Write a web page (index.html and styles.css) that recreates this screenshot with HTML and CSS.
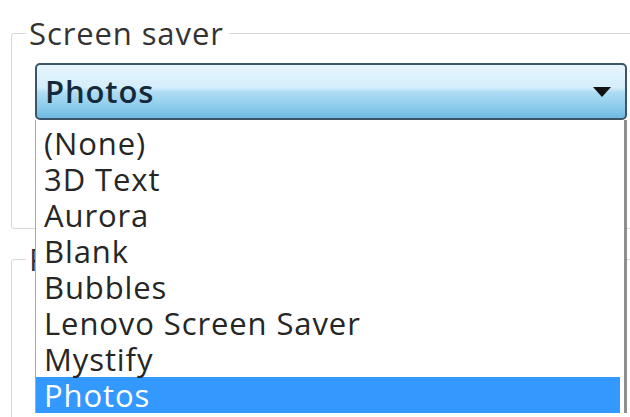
FILE: index.html
```html
<!DOCTYPE html>
<html>
<head>
<meta charset="utf-8">
<link rel="stylesheet" href="styles.css">
</head>
<body>
<div class="page">
  <fieldset class="group group-saver">
    <legend class="group-label">Screen saver</legend>
    <div class="combo">
      <div class="combo-box">
        <span class="combo-value">Photos</span>
        <svg class="combo-arrow" width="18" height="10" viewBox="0 0 18 10"><path d="M0 0 H18 L9 10 Z" fill="#111"/></svg>
      </div>
      <ul class="combo-list">
        <li class="combo-item">(None)</li>
        <li class="combo-item">3D Text</li>
        <li class="combo-item">Aurora</li>
        <li class="combo-item">Blank</li>
        <li class="combo-item">Bubbles</li>
        <li class="combo-item">Lenovo Screen Saver</li>
        <li class="combo-item">Mystify</li>
        <li class="combo-item is-selected">Photos</li>
      </ul>
    </div>
  </fieldset>
  <fieldset class="group group-power">
    <legend class="group-label">Power management</legend>
  </fieldset>
</div>
</body>
</html>
```
FILE: styles.css
```css
html, body {
  margin: 0;
  padding: 0;
  background: #ffffff;
  overflow: hidden;
  width: 630px;
  height: 417px;
}

.page {
  font-family: "Open Sans", "Noto Sans", sans-serif;
  font-size: 31px;
  letter-spacing: 0.9px;
  font-weight: 500;
  color: #2b2b2b;
  padding-top: 16px;
  padding-left: 11px;
  width: 660px;
}

.group {
  margin: 0;
  padding: 0;
  border: 1px solid #d6d9dc;
  border-radius: 3px;
  min-width: 0;
}

.group-label {
  margin-left: 14px;
  padding: 0 5px 0 3px;
  line-height: 34px;
  color: #333333;
}

.group-saver {
  height: 211px;
  position: relative;
  z-index: 2;
}

.group-power {
  margin-top: 13px;
  height: 200px;
}

.combo {
  position: relative;
  margin-top: 13px;
  margin-left: 23px;
  width: 592px;
}

.combo-box {
  box-sizing: border-box;
  height: 57px;
  border: 2px solid #3c5668;
  border-radius: 5px;
  background: linear-gradient(#e7f5fd 0%, #d4eefb 42%, #aedcf4 52%, #8ccbeb 80%, #70bae2 100%);
  display: flex;
  align-items: center;
  justify-content: space-between;
  padding: 0 14px 0 8px;
  color: #15293a;
  font-weight: 600;
}

.combo-value {
  line-height: 1;
}

.combo-arrow {
  display: block;
}

.combo-list {
  position: absolute;
  top: 100%;
  left: 0;
  width: 592px;
  box-sizing: border-box;
  margin: 0;
  padding: 5px 4px 0 0;
  list-style: none;
  background: #ffffff;
  border-left: 1px solid #a9a9a9;
  border-right: 3px solid #8e8e8e;
  color: #262626;
}

.combo-item {
  height: 36px;
  line-height: 36px;
  padding-left: 8px;
  white-space: nowrap;
}

.combo-item.is-selected {
  background: #3399ff;
  color: #ffffff;
}
```
